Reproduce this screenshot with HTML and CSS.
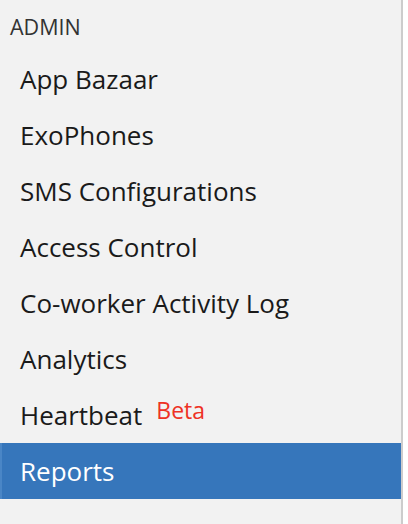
FILE: index.html
```html
<!DOCTYPE html>
<html>
<head>
<meta charset="utf-8">
<link rel="stylesheet" href="styles.css">
</head>
<body>
<nav class="panel">
  <div class="heading">ADMIN</div>
  <ul class="menu">
    <li class="item">App Bazaar</li>
    <li class="item">ExoPhones</li>
    <li class="item">SMS Configurations</li>
    <li class="item">Access Control</li>
    <li class="item">Co-worker Activity Log</li>
    <li class="item">Analytics</li>
    <li class="item">Heartbeat <span class="beta">Beta</span></li>
    <li class="item active">Reports</li>
  </ul>
</nav>
</body>
</html>
```
FILE: styles.css
```css
html, body {
  margin: 0;
  padding: 0;
  background: #ffffff;
}
.panel {
  width: 401px;
  height: 524px;
  background: #f2f2f2;
  border-right: 2px solid #cccccc;
  font-family: "Open Sans", "Noto Sans", sans-serif;
  box-sizing: content-box;
}
.heading {
  height: 51px;
  box-sizing: border-box;
  padding: 14px 0 0 10px;
  font-size: 21.5px;
  line-height: 26px;
  color: #333333;
}
.menu {
  list-style: none;
  margin: 0;
  padding: 0;
}
.item {
  height: 56px;
  display: flex;
  align-items: center;
  padding-left: 20px;
  font-size: 26px;
  color: #1a1a1a;
}
.item.active {
  background: #3676bb;
  color: #ffffff;
  box-shadow: inset 2px 0 0 #4a86c6;
}
.beta {
  color: #ee3124;
  font-size: 23px;
  margin-left: 14px;
  position: relative;
  top: -5px;
}
```
